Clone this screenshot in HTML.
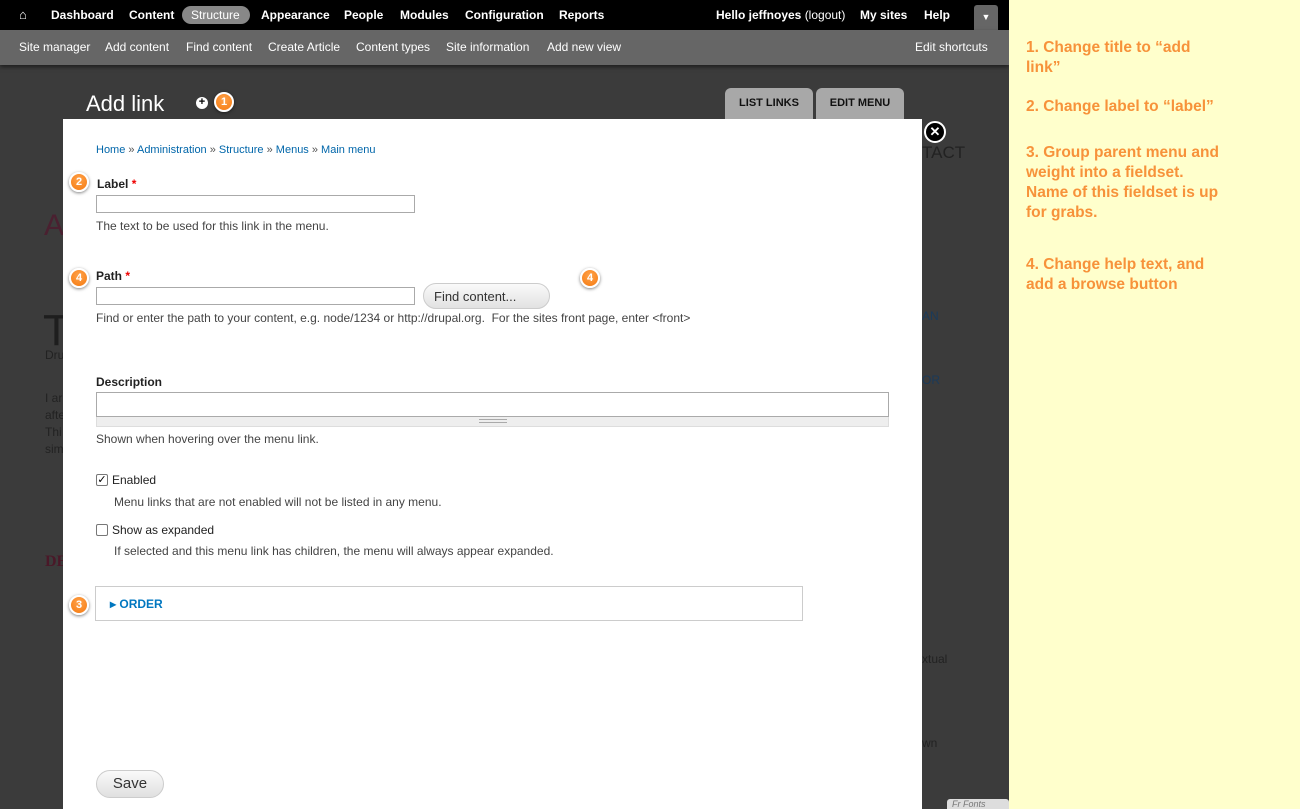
<!DOCTYPE html>
<html><head><meta charset="utf-8"><style>
*{margin:0;padding:0;box-sizing:border-box}
body{width:1300px;height:809px;overflow:hidden;position:relative;font-family:"Liberation Sans",sans-serif;background:#3a3a3a}
.a{position:absolute;white-space:nowrap}
#top{left:0;top:0;width:1009px;height:30px;background:#000}
#top .a{color:#fff;font-size:12px;font-weight:bold;top:8px}
#sub{left:0;top:30px;width:1009px;height:35px;background:#666;box-shadow:0 2px 4px rgba(0,0,0,.5)}
#sub .a{color:#fff;font-size:12px;top:10px}
#bg{left:0;top:65px;width:1009px;height:744px;background:#3b3b3b}
.tab{background:#a8a8a8;border-radius:6px 6px 0 0;height:31px;top:88px;font-size:11px;font-weight:bold;color:#111;text-align:center;line-height:30px}
#modal{left:63px;top:119px;width:859px;height:690px;background:#fff}
.num{width:20px;height:20px;border-radius:50%;background:radial-gradient(circle at 50% 35%,#ffa24a,#f57a10);border:2px solid #fff;box-shadow:0 1px 3px rgba(0,0,0,.5);color:#fff;font-size:11px;text-align:center;line-height:17px;font-weight:bold}
.lbl{font-size:12px;font-weight:bold;color:#222}
.desc{font-size:12px;color:#444}
.inp{border:1px solid #aaa;background:#fff;height:18px}
.req{color:#e00}
#panel{left:1009px;top:0;width:291px;height:809px;background:#ffffcc}
#panel .a{color:#f7923a;font-weight:bold;font-size:15.5px;line-height:20px;left:17px;white-space:normal;width:200px}
</style></head><body>
<div class="a" id="bg">
<div class="a" style="left:44px;top:144px;font-size:30px;color:#4a2030">A</div>
<div class="a" style="left:43px;top:241px;font-size:44px;color:#1e1e1e">T</div>
<div class="a" style="left:45px;top:283px;font-size:12px;color:#222">Dru</div>
<div class="a" style="left:45px;top:325px;font-size:12px;color:#222;line-height:17px;white-space:normal;width:20px;overflow:hidden;height:70px">I ar afte Thi sim</div>
<div class="a" style="left:45px;top:488px;font-size:16px;color:#4a1828;font-family:'Liberation Serif',serif;font-weight:bold">DE</div>
<div class="a" style="left:922px;top:78px;font-size:17px;color:#222">TACT</div>
<div class="a" style="left:922px;top:244px;font-size:12px;color:#1a3a5a">AN</div>
<div class="a" style="left:922px;top:308px;font-size:12px;color:#1a3a5a">OR</div>
<div class="a" style="left:922px;top:587px;font-size:12px;color:#222">xtual</div>
<div class="a" style="left:922px;top:671px;font-size:12px;color:#222">wn</div>
</div>
<div class="a" id="top">
<div class="a" style="left:19px;top:7px;font-size:13px">&#8962;</div>
<div class="a" style="left:51px">Dashboard</div>
<div class="a" style="left:129px">Content</div>
<div class="a" style="left:182px;top:6px;width:68px;height:18px;background:#888;border-radius:9px;padding:2px 0 0 9px;font-weight:normal">Structure</div>
<div class="a" style="left:261px">Appearance</div>
<div class="a" style="left:344px">People</div>
<div class="a" style="left:400px">Modules</div>
<div class="a" style="left:465px">Configuration</div>
<div class="a" style="left:559px">Reports</div>
<div class="a" style="left:716px">Hello jeffnoyes <span style="font-weight:normal">(logout)</span></div>
<div class="a" style="left:860px">My sites</div>
<div class="a" style="left:924px">Help</div>
<div class="a" style="left:974px;top:5px;width:24px;height:25px;background:#666;border-radius:3px 3px 0 0;font-size:9px;text-align:center;line-height:25px">▼</div>
</div>
<div class="a" id="sub">
<div class="a" style="left:19px">Site manager</div>
<div class="a" style="left:105px">Add content</div>
<div class="a" style="left:186px">Find content</div>
<div class="a" style="left:268px">Create Article</div>
<div class="a" style="left:356px">Content types</div>
<div class="a" style="left:446px">Site information</div>
<div class="a" style="left:547px">Add new view</div>
<div class="a" style="left:915px">Edit shortcuts</div>
</div>
<div class="a" style="left:86px;top:91px;font-size:22px;color:#fff">Add link</div>
<div class="a" style="left:196px;top:97px;width:12px;height:12px;border-radius:50%;background:#fff;color:#000;font-size:11px;line-height:11px;text-align:center;font-weight:bold">+</div>
<div class="a num" style="left:214px;top:92px">1</div>
<div class="a tab" style="left:725px;width:88px">LIST LINKS</div>
<div class="a tab" style="left:816px;width:88px">EDIT MENU</div>
<div class="a" id="modal">
<div class="a" style="left:33px;top:25px;font-size:11px;color:#0066aa">Home <span style="color:#555">»</span> Administration <span style="color:#555">»</span> Structure <span style="color:#555">»</span> Menus <span style="color:#555">»</span> Main menu</div>
<div class="a lbl" style="left:34px;top:58px">Label <span class="req">*</span></div>
<div class="a inp" style="left:33px;top:76px;width:319px"></div>
<div class="a desc" style="left:33px;top:100px">The text to be used for this link in the menu.</div>
<div class="a lbl" style="left:33px;top:150px">Path <span class="req">*</span></div>
<div class="a inp" style="left:33px;top:168px;width:319px"></div>
<div class="a" style="left:360px;top:164px;width:127px;height:26px;border:1px solid #ccc;border-radius:13px;background:linear-gradient(#fafafa,#e2e2e2);font-size:13px;color:#333;padding:5px 0 0 10px">Find content...</div>
<div class="a desc" style="left:33px;top:192px">Find or enter the path to your content, e.g. node/1234 or http://drupal.org.&nbsp; For the sites front page, enter &lt;front&gt;</div>
<div class="a lbl" style="left:33px;top:256px">Description</div>
<div class="a inp" style="left:33px;top:273px;width:793px;height:25px"></div>
<div class="a" style="left:33px;top:298px;width:793px;height:10px;background:#eee;border:1px solid #ddd;border-top:none"><div class="a" style="left:382px;top:2px;width:28px;height:4px;border-top:1px solid #aaa;border-bottom:1px solid #aaa"></div></div>
<div class="a desc" style="left:33px;top:313px">Shown when hovering over the menu link.</div>
<div class="a" style="left:33px;top:355px;width:12px;height:12px;border:1px solid #777;border-radius:2px;font-size:11px;line-height:10px;text-align:center">✓</div>
<div class="a" style="left:49px;top:354px;font-size:12px;color:#222">Enabled</div>
<div class="a desc" style="left:51px;top:376px">Menu links that are not enabled will not be listed in any menu.</div>
<div class="a" style="left:33px;top:405px;width:12px;height:12px;border:1px solid #777;border-radius:2px"></div>
<div class="a" style="left:49px;top:404px;font-size:12px;color:#222">Show as expanded</div>
<div class="a desc" style="left:51px;top:425px">If selected and this menu link has children, the menu will always appear expanded.</div>
<div class="a" style="left:32px;top:467px;width:708px;height:35px;border:1px solid #ccc"></div>
<div class="a" style="left:47px;top:478px;font-size:12px;font-weight:bold;color:#0077c0">&#9656; ORDER</div>
<div class="a" style="left:33px;top:651px;width:68px;height:28px;border:1px solid #ccc;border-radius:14px;background:linear-gradient(#fafafa,#e0e0e0);font-size:15px;color:#333;text-align:center;line-height:26px">Save</div>
</div>
<div class="a" style="left:924px;top:121px;width:22px;height:22px;border-radius:50%;background:#000;border:2px solid #fff;color:#fff;font-size:13px;font-weight:bold;text-align:center;line-height:18px">✕</div>
<div class="a num" style="left:69px;top:172px">2</div>
<div class="a num" style="left:69px;top:268px">4</div>
<div class="a num" style="left:580px;top:268px">4</div>
<div class="a num" style="left:69px;top:595px">3</div>
<div class="a" style="left:947px;top:799px;width:62px;height:10px;background:#ddd;border-radius:3px 3px 0 0;font-size:9px;color:#777;font-style:italic;padding-left:5px">Fr Fonts</div>
<div class="a" id="panel">
<div class="a" style="top:38px">1. Change title to “add link”</div>
<div class="a" style="top:97px;width:230px">2. Change label to “label”</div>
<div class="a" style="top:143px">3. Group parent menu and weight into a fieldset. Name of this fieldset is up for grabs.</div>
<div class="a" style="top:255px">4. Change help text, and add a browse button</div>
</div>
</body></html>
